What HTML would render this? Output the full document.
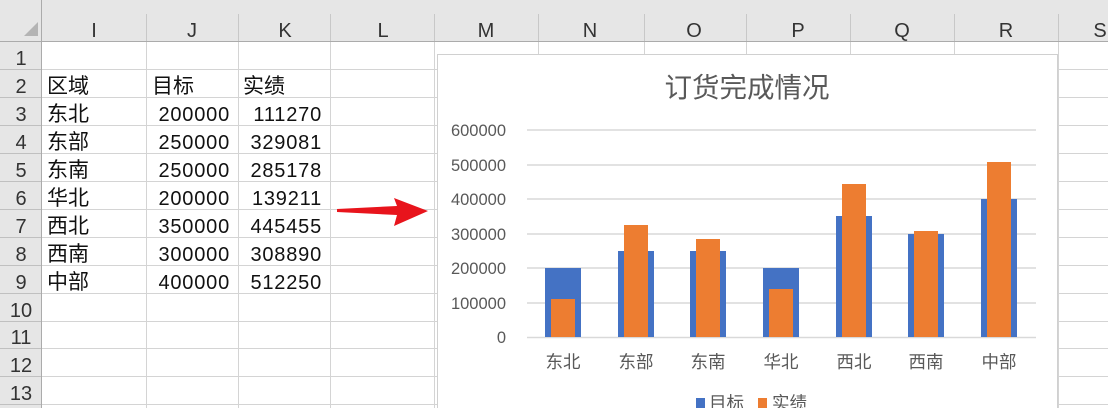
<!DOCTYPE html>
<html><head><meta charset="utf-8"><style>
html,body{margin:0;padding:0;background:#fff;overflow:hidden}
svg{display:block}
.c{font-family:"Liberation Sans","Noto Sans CJK SC",sans-serif;font-size:21px;fill:#111}
.n{font-family:"Liberation Sans",sans-serif;font-size:20px;fill:#111;letter-spacing:0.8px}
.h{font-family:"Liberation Sans",sans-serif;font-size:20px;fill:#333}
.ax{font-family:"Liberation Sans",sans-serif;font-size:16.5px;fill:#595959}
.cat{font-family:"Noto Sans CJK SC",sans-serif;font-size:17.5px;fill:#595959}
</style></head><body>
<svg width="1108" height="408" viewBox="0 0 1108 408" xmlns="http://www.w3.org/2000/svg">
<rect width="1108" height="408" fill="#fff"/>
<rect x="0" y="0" width="1108" height="42" fill="#e6e6e6"/>
<rect x="0" y="0" width="42" height="408" fill="#e6e6e6"/>
<polygon points="24,36 38,36 38,22" fill="#b4b4b4"/>
<line x1="0" y1="41.5" x2="1108" y2="41.5" stroke="#ababab"/>
<line x1="41.5" y1="0" x2="41.5" y2="408" stroke="#ababab"/>
<g stroke="#c8c8c8">
<line x1="146.5" y1="14" x2="146.5" y2="41"/><line x1="238.5" y1="14" x2="238.5" y2="41"/><line x1="330.5" y1="14" x2="330.5" y2="41"/><line x1="434.5" y1="14" x2="434.5" y2="41"/><line x1="538.5" y1="14" x2="538.5" y2="41"/><line x1="644.5" y1="14" x2="644.5" y2="41"/><line x1="746.5" y1="14" x2="746.5" y2="41"/><line x1="850.5" y1="14" x2="850.5" y2="41"/><line x1="954.5" y1="14" x2="954.5" y2="41"/><line x1="1058.5" y1="14" x2="1058.5" y2="41"/>
</g>
<g class="h" text-anchor="middle">
<text x="94" y="37">I</text><text x="192" y="37">J</text><text x="285" y="37">K</text><text x="383" y="37">L</text><text x="486" y="37">M</text><text x="590" y="37">N</text><text x="694" y="37">O</text><text x="798" y="37">P</text><text x="902" y="37">Q</text><text x="1006" y="37">R</text><text x="1100" y="37">S</text>
</g>
<g stroke="#d4d4d4">
<line x1="42" y1="69.5" x2="1108" y2="69.5"/><line x1="42" y1="97.5" x2="1108" y2="97.5"/><line x1="42" y1="125.5" x2="1108" y2="125.5"/><line x1="42" y1="153.5" x2="1108" y2="153.5"/><line x1="42" y1="181.5" x2="1108" y2="181.5"/><line x1="42" y1="209.5" x2="1108" y2="209.5"/><line x1="42" y1="237.5" x2="1108" y2="237.5"/><line x1="42" y1="265.5" x2="1108" y2="265.5"/><line x1="42" y1="293.5" x2="1108" y2="293.5"/><line x1="42" y1="321.5" x2="1108" y2="321.5"/><line x1="42" y1="348.5" x2="1108" y2="348.5"/><line x1="42" y1="376.5" x2="1108" y2="376.5"/><line x1="42" y1="404.5" x2="1108" y2="404.5"/>
<line x1="146.5" y1="42" x2="146.5" y2="408"/><line x1="238.5" y1="42" x2="238.5" y2="408"/><line x1="330.5" y1="42" x2="330.5" y2="408"/><line x1="434.5" y1="42" x2="434.5" y2="408"/><line x1="538.5" y1="42" x2="538.5" y2="408"/><line x1="644.5" y1="42" x2="644.5" y2="408"/><line x1="746.5" y1="42" x2="746.5" y2="408"/><line x1="850.5" y1="42" x2="850.5" y2="408"/><line x1="954.5" y1="42" x2="954.5" y2="408"/><line x1="1058.5" y1="42" x2="1058.5" y2="408"/>
</g>
<g stroke="#c0c0c0">
<line x1="0" y1="69.5" x2="41" y2="69.5"/><line x1="0" y1="97.5" x2="41" y2="97.5"/><line x1="0" y1="125.5" x2="41" y2="125.5"/><line x1="0" y1="153.5" x2="41" y2="153.5"/><line x1="0" y1="181.5" x2="41" y2="181.5"/><line x1="0" y1="209.5" x2="41" y2="209.5"/><line x1="0" y1="237.5" x2="41" y2="237.5"/><line x1="0" y1="265.5" x2="41" y2="265.5"/><line x1="0" y1="293.5" x2="41" y2="293.5"/><line x1="0" y1="321.5" x2="41" y2="321.5"/><line x1="0" y1="348.5" x2="41" y2="348.5"/><line x1="0" y1="376.5" x2="41" y2="376.5"/><line x1="0" y1="404.5" x2="41" y2="404.5"/>
</g>
<g class="h" text-anchor="middle">
<text x="21" y="65">1</text><text x="21" y="93">2</text><text x="21" y="121">3</text><text x="21" y="149">4</text><text x="21" y="177">5</text><text x="21" y="205">6</text><text x="21" y="233">7</text><text x="21" y="261">8</text><text x="21" y="289">9</text><text x="21" y="317">10</text><text x="21" y="344">11</text><text x="21" y="372">12</text><text x="21" y="400">13</text>
</g>
<g class="c">
<text x="47" y="93">区域</text><text x="152" y="93">目标</text><text x="243" y="93">实绩</text>
<text x="47" y="121">东北</text><text x="47" y="149">东部</text><text x="47" y="177">东南</text><text x="47" y="205">华北</text><text x="47" y="233">西北</text><text x="47" y="261">西南</text><text x="47" y="289">中部</text>
</g>
<g class="n" text-anchor="end">
<text x="230" y="121">200000</text><text x="230" y="149">250000</text><text x="230" y="177">250000</text><text x="230" y="205">200000</text><text x="230" y="233">350000</text><text x="230" y="261">300000</text><text x="230" y="289">400000</text>
<text x="322" y="121">111270</text><text x="322" y="149">329081</text><text x="322" y="177">285178</text><text x="322" y="205">139211</text><text x="322" y="233">445455</text><text x="322" y="261">308890</text><text x="322" y="289">512250</text>
</g>
<polygon points="337,209 397,206 394,198 428,211 394,226 397,215 337,212" fill="#e8141c"/>
<rect x="437.5" y="54.5" width="620" height="360" fill="#fff" stroke="#d0d0d0"/>
<text x="747" y="97" text-anchor="middle" style="font-family:'Noto Sans CJK SC',sans-serif;font-size:27.5px;fill:#595959">订货完成情况</text>
<g stroke="#d9d9d9" stroke-width="1.5">
<line x1="527" y1="130" x2="1036" y2="130"/><line x1="527" y1="165" x2="1036" y2="165"/><line x1="527" y1="199" x2="1036" y2="199"/><line x1="527" y1="234" x2="1036" y2="234"/><line x1="527" y1="268" x2="1036" y2="268"/><line x1="527" y1="303" x2="1036" y2="303"/><line x1="527" y1="337.5" x2="1036" y2="337.5"/>
</g>
<g class="ax" text-anchor="end">
<text x="506" y="136">600000</text><text x="506" y="171">500000</text><text x="506" y="205">400000</text><text x="506" y="240">300000</text><text x="506" y="274">200000</text><text x="506" y="309">100000</text><text x="506" y="343">0</text>
</g>
<g fill="#4472c4">
<rect x="545" y="268" width="36" height="69"/>
<rect x="618" y="251" width="36" height="86"/>
<rect x="690" y="251" width="36" height="86"/>
<rect x="763" y="268" width="36" height="69"/>
<rect x="836" y="216" width="36" height="121"/>
<rect x="908" y="234" width="36" height="103"/>
<rect x="981" y="199" width="36" height="138"/>
</g>
<g fill="#ed7d31">
<rect x="551" y="299" width="24" height="38"/>
<rect x="624" y="225" width="24" height="112"/>
<rect x="696" y="239" width="24" height="98"/>
<rect x="769" y="289" width="24" height="48"/>
<rect x="842" y="184" width="24" height="153"/>
<rect x="914" y="231" width="24" height="106"/>
<rect x="987" y="162" width="24" height="175"/>
</g>
<g class="cat" text-anchor="middle">
<text x="563" y="368">东北</text><text x="636" y="368">东部</text><text x="708" y="368">东南</text><text x="781" y="368">华北</text><text x="854" y="368">西北</text><text x="926" y="368">西南</text><text x="999" y="368">中部</text>
</g>
<rect x="696" y="398" width="9" height="10" fill="#4472c4"/>
<text x="709" y="409" class="cat">目标</text>
<rect x="758" y="398" width="9" height="10" fill="#ed7d31"/>
<text x="772" y="409" class="cat">实绩</text>
</svg>
</body></html>
